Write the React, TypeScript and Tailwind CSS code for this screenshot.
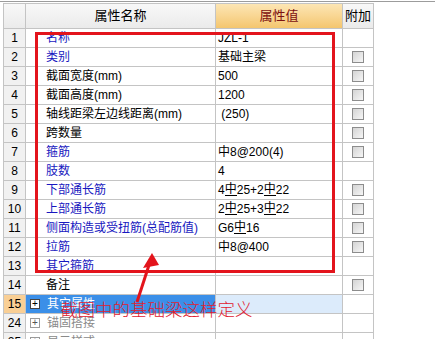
type Row = {
  n: string,
  name: string,
  blue?: boolean,
  value?: React.ReactNode,
  check?: boolean,
  kind?: 'selected' | 'group'
}

const A = () => <span>中</span>
const C = () => (
  <span className="inline-block leading-[11px] border-b border-black">中</span>
)

const rows: Row[] = [
  {n: '1', name: '名称', blue: true, value: 'JZL-1'},
  {n: '2', name: '类别', blue: true, value: '基础主梁', check: true},
  {n: '3', name: '截面宽度(mm)', value: '500', check: true},
  {n: '4', name: '截面高度(mm)', value: '1200', check: true},
  {n: '5', name: '轴线距梁左边线距离(mm)', value: ' (250)', check: true},
  {n: '6', name: '跨数量', value: '', check: true},
  {n: '7', name: '箍筋', blue: true, value: <> <A />8@200(4)</>, check: true},
  {n: '8', name: '肢数', blue: true, value: '4'},
  {n: '9', name: '下部通长筋', blue: true, value: <>4<C />25+2<C />22</>, check: true},
  {n: '10', name: '上部通长筋', blue: true, value: <>2<C />25+3<C />22</>, check: true},
  {n: '11', name: '侧面构造或受扭筋(总配筋值)', blue: true, value: <>G6<C />16</>, check: true},
  {n: '12', name: '拉筋', blue: true, value: <> <A />8@400</>, check: true},
  {n: '13', name: '其它箍筋', blue: true, value: ''},
  {n: '14', name: '备注', value: '', check: true},
  {n: '15', name: '其它属性', kind: 'selected'},
  {n: '24', name: '锚固搭接', kind: 'group'},
  {n: '25', name: '显示样式', kind: 'group'},
]

const Check = () => (
  <div className="w-[12px] h-[12px] border border-[#8c8c8c] bg-gradient-to-br from-[#d4d4d4] to-[#f6f6f6]" />
)

const Plus = ({light}: {light?: boolean}) => (
  <div className={`w-[10px] h-[10px] border flex items-center justify-center text-[10px] leading-none ${light ? 'border-[#9a9a9a] bg-white text-[#555]' : 'border-[#444] bg-white text-black'}`}>
    +
  </div>
)

const App = () => {
  return (
    <div className="relative w-[435px] h-[339px] overflow-hidden bg-white text-[12px] text-black" style={{fontFamily: '"Liberation Sans", "Noto Sans CJK SC", sans-serif'}}>
      <div className="h-[1px]" />
      <div className="h-[1px] bg-[#9c9c9c]" />
      <div className="h-[1px]" />

      <div className="ml-[3px] w-[371px] border-l border-t border-[#c4c4c4]">
        {/* header */}
        <div className="flex h-[25px] border-b border-[#c4c4c4]">
          <div className="w-[22px] border-r border-[#c4c4c4] bg-gradient-to-b from-[#f8f8f8] to-[#ebebeb]" />
          <div className="w-[190px] border-r border-[#c4c4c4] bg-gradient-to-b from-[#f8f8f8] to-[#ebebeb] flex items-center justify-center text-[13px]">属性名称</div>
          <div className="w-[127px] border-r border-[#c4c4c4] bg-gradient-to-b from-[#fde6b4] to-[#f4c66e] flex items-center justify-center text-[13px] text-[#7d1010]">属性值</div>
          <div className="w-[31px] border-r border-[#c4c4c4] bg-gradient-to-b from-[#f8f8f8] to-[#ebebeb] flex items-center justify-center text-[13px]">附加</div>
        </div>

        {rows.map(r => (
          <div key={r.n} className="flex h-[19px] border-b border-[#c4c4c4]">
            <div className={`w-[22px] border-r border-[#c4c4c4] flex items-center justify-center ${r.kind === 'selected' ? 'bg-[#f9cf95]' : 'bg-[#f1f1f1]'}`}>
              {r.n}
            </div>
            {r.kind ? (
              <div className={`w-[190px] border-r border-[#c4c4c4] flex items-center gap-[7px] pl-[4px] ${r.kind === 'selected' ? 'bg-[#3b8fe8] text-white' : 'text-[#8a8a8a]'}`}>
                <Plus light={r.kind === 'group'} />
                <span>{r.name}</span>
              </div>
            ) : (
              <div className={`w-[190px] border-r border-[#c4c4c4] flex items-center pl-[20px] whitespace-nowrap ${r.blue ? 'text-[#1818c0]' : ''}`}>
                {r.name}
              </div>
            )}
            <div className={`w-[127px] border-r border-[#c4c4c4] flex items-center pl-[2px] whitespace-pre ${r.kind === 'selected' ? 'bg-[#dcebfb]' : ''}`}>
              {r.value}
            </div>
            <div className="w-[31px] border-r border-[#c4c4c4] flex items-center justify-center">
              {r.check && <Check />}
            </div>
          </div>
        ))}
      </div>

      {/* red annotation */}
      <div className="absolute left-[35px] top-[32px] w-[300px] h-[241px] border-[3px] border-[#e3141c] pointer-events-none" />
      <svg className="absolute left-0 top-0 pointer-events-none" width="435" height="339">
        <line x1="137" y1="302" x2="150" y2="262" stroke="#e3141c" strokeWidth="3" />
        <polygon points="152,253 143,268 159,265" fill="#e3141c" />
      </svg>
      <div className="absolute left-[60px] top-[300px] text-[17.5px] leading-none font-light text-[#e02030] whitespace-nowrap" style={{fontFamily: '"Noto Sans CJK SC", sans-serif'}}>
        截图中的基础梁这样定义
      </div>
    </div>
  )
}

export default App
